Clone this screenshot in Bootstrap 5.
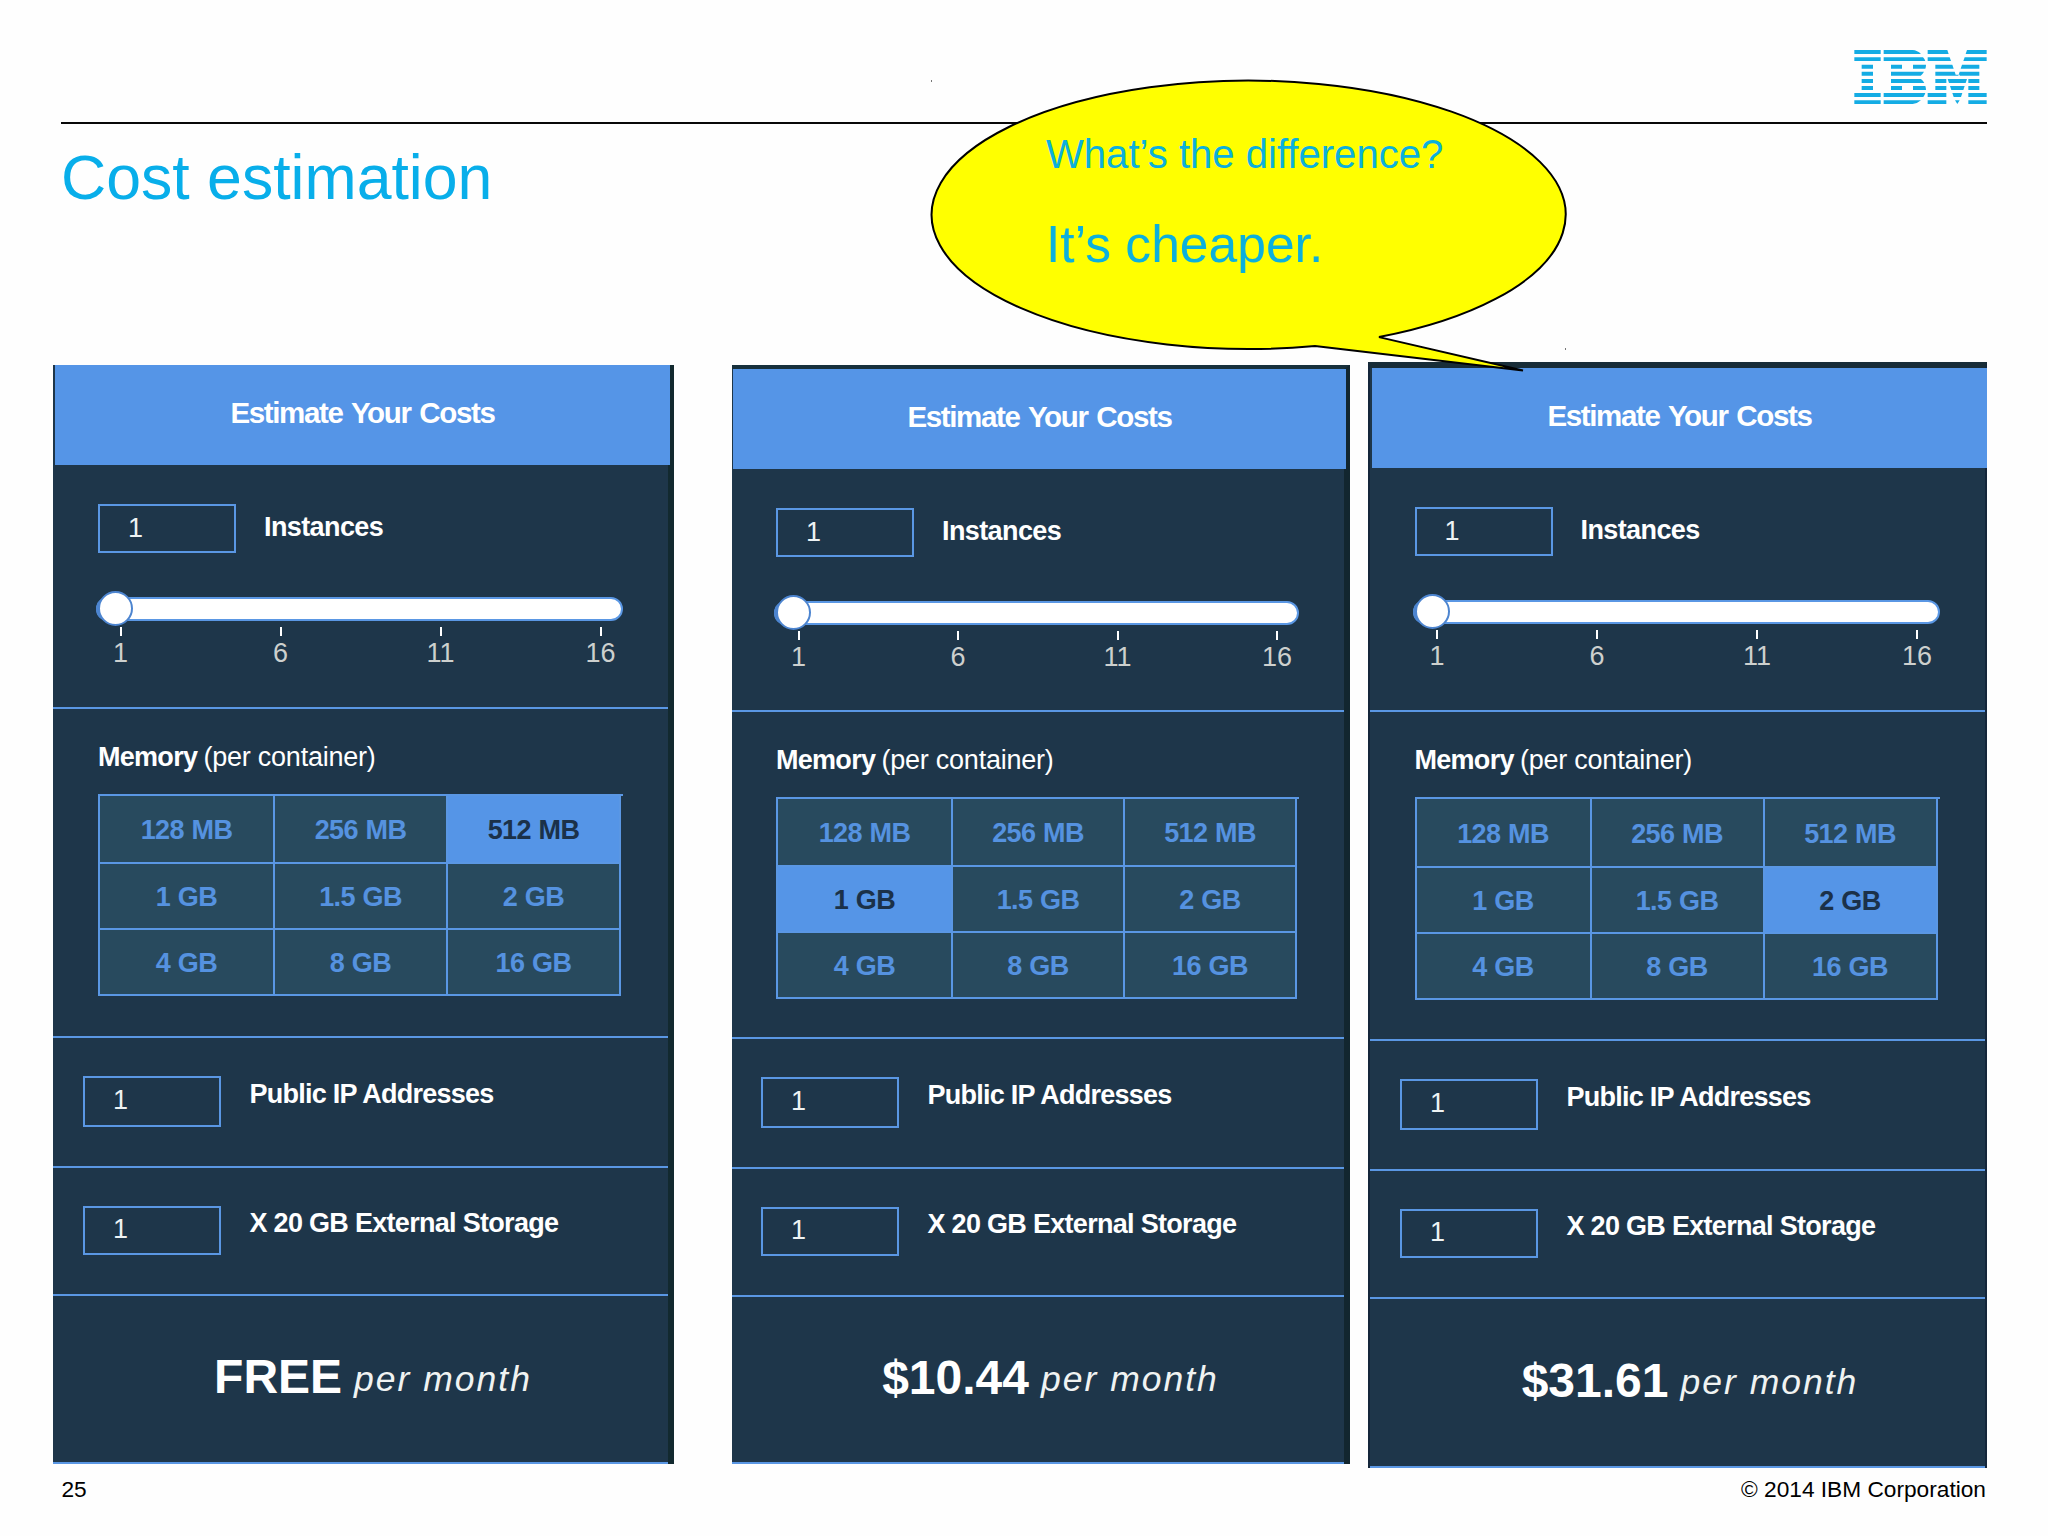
<!DOCTYPE html>
<html lang="en">
<head>
<meta charset="utf-8">
<title>Cost estimation</title>
<link href="https://cdn.jsdelivr.net/npm/bootstrap@5.3.0/dist/css/bootstrap.min.css" rel="stylesheet">
<style>
:root{--edge:#5a97e4;--fill:#5595e7;--navy:#1e364a;--cell:#284a5e;--ibm:#08aeea}
body{width:2048px;height:1536px;overflow:hidden;background:#fefefe;font-family:"Liberation Sans",Arial,sans-serif;color:#000}
.slide{width:2048px;height:1536px}
.masthead{height:124px;margin:0 61px;border-bottom:2px solid #080808;padding-top:40px}
.brand-logo{width:160px;height:80px;margin-right:-13px}
.slide-title{height:238px;margin:0;padding:18px 0 0 61px;font-size:62.6px;line-height:70px;font-weight:400;color:var(--ibm)}
.panels{padding-left:53px;height:1106px}
.panel{background:var(--navy);color:#fff;font-size:27px;line-height:28px}
.p1{width:621px;margin-top:3px;height:1099px;border-right:6px solid #12292f;--in:45px;--out:30px;--mid:244px;--mem:329px;--ip:130px}
.p2{width:618px;margin:3px 0 0 58px;height:1099px;border-top:4px solid #17303c;border-right:6px solid #12262f;--in:44px;--out:29px;--mid:243px;--mem:327px;--ip:130px}
.p3{width:619px;margin-left:18px;height:1106px;border-top:6px solid #182d38;border-left:2px solid #14263a;border-right:2px solid #14263a;--in:44.5px;--out:30px;--mid:244px;--mem:329px;--ip:130px}
.p1 .panel-title{margin:0 -2px 0 2px}.p2 .panel-title{margin:0 -2px 0 1px}.p3 .panel-title{margin:0 -2px 0 2px}
.panel-title{height:100px;background:var(--fill);font-size:29.5px;line-height:95px;font-weight:700;letter-spacing:-1.35px;word-spacing:2px;text-align:center}
.sect{border-bottom:2.6px solid var(--edge)}
.s-inst{height:var(--mid);padding:39px 0 0 var(--in)}
.s-mem{height:var(--mem);padding:34px 0 0 var(--in)}
.s-ip,.s-sto{height:var(--ip);padding:38px 0 0 var(--out)}
.s-sto{height:128px}
.s-cost{flex:1;padding:0 0 4px 25px;border-bottom:2px solid var(--edge)}
.num{width:138px;height:49px;border:2px solid var(--edge);padding-left:28px;line-height:45px;color:#eef3f4}
.s-ip .num{height:51px}
.s-sto .num{line-height:43px}
.lbl{font-weight:700;letter-spacing:-.6px;margin-left:28px;line-height:46px}
.s-ip .lbl{letter-spacing:-.74px;margin-left:28.5px;line-height:37px}
.s-sto .lbl{letter-spacing:-.7px;margin-left:28.5px;line-height:34px}
.track{width:527px;height:24px;margin:44px 0 0 -2px;border:2px solid var(--edge);border-radius:12px;background:#fff}
.p2 .track{width:525px}
.knob{position:absolute;left:0;top:-8px;width:35px;height:35px;border:2px solid #4d85d0;border-radius:50%;background:#fff}
.knob-tail{position:absolute;left:-2px;top:-2px;width:12px;height:24px;border-radius:12px 0 0 12px;background:#4d85d0}
.ticks{width:540px;margin:6px 0 0 -7.5px;color:#cdd0ce}
.p2 .ticks{width:538px}
.ticks>div{width:60px;text-align:center;margin-right:100px;flex:none}
.ticks>div:last-child{margin-right:0}
.p2 .ticks>div{margin-right:99.5px}
.ticks i{display:block;width:2px;height:9px;margin:0 auto 3px;background:#fff}
.mem-head{letter-spacing:-.72px;height:51px}
.mem-head span{letter-spacing:-.24px;margin-left:-.5px}
.mem-grid{position:relative;display:grid;width:523px;height:202px;padding:2px;gap:2px;background:var(--edge);grid-template-columns:173px 171px 1fr;grid-template-rows:66px 64px 64px}
.p2 .mem-grid{width:521px;grid-template-columns:173px 170px 1fr}
.p3 .mem-grid{height:203px;grid-template-rows:67px 64px 64px}
.mem-grid::after{content:"";position:absolute;right:-2px;top:0;width:2px;height:2px;background:var(--edge)}
.mem-grid div{display:flex;align-items:center;justify-content:center;padding-top:2px;background:var(--cell);color:#5592e0;font-weight:700;letter-spacing:-.55px;word-spacing:.5px}
.mem-grid .on{background:var(--fill);color:#1b3149}
.price{font-size:48px;font-weight:700;line-height:50px}
.per{font-size:35.5px;font-style:italic;letter-spacing:2px;line-height:50px;padding-top:3px;color:#f0f3f2}
.callout{position:absolute;left:920px;top:70px;width:660px;height:310px}
.say{position:absolute;left:1046px;top:131px;color:#0cb0dc;white-space:nowrap}
.say .q{font-size:40.1px;line-height:46px}
.say .a{font-size:51.6px;line-height:60px;margin-top:37px}
.foot{height:68px;padding:8px 62px 0 61.5px;font-size:22.7px;line-height:26px}
</style>
</head>
<body>
<main class="slide position-relative d-flex flex-column">
<header class="masthead d-flex justify-content-end flex-shrink-0">
<svg class="brand-logo flex-shrink-0" viewBox="0 0 480 240" fill="#14ace4" role="img" aria-label="IBM">
<path d="M43 30H122V42H43zM43 52H122V63H43zM65 74H99V86H65zM65 95H99V107H65zM65 117H99V129H65zM65 138H99V150H65zM43 159H122V171H43zM43 181H122V192H43z"/>
<path d="M131 30H218Q232 31 243 42H131zM131 52H249Q254 57 256 63H131zM153 74H186V86H153zM219 74H258Q258 80 256 86H219zM153 95H252Q248 102 242 107H153zM153 117H243Q249 121 253 129H153zM153 138H186V150H153zM219 138H256Q258 144 258 150H219zM131 159H256Q254 166 250 171H131zM131 181H243Q232 191 218 192H131z"/>
<path d="M263 30H322L326 42H263zM263 52H329L333 63H263zM286 74H337L341 86H286zM286 95H344L348 107H286zM286 117H319V129H286zM286 138H319V150H286zM263 159H319V171H263zM263 181H319V192H263zM440 30H381L377 42H440zM440 52H374L370 63H440zM418 74H366L362 86H418zM418 95H359L355 107H418zM418 117H385V129H418zM418 138H385V150H418zM440 159H385V171H440zM440 181H385V192H440zM344 104H359V107H344zM323 117H381L377 129H327zM330 138H374L370 150H334zM337 159H367L363 171H341zM345 181H359L352 192z"/>
</svg>
</header>
<h1 class="slide-title flex-shrink-0">Cost estimation</h1>

<div class="panels d-flex align-items-start flex-shrink-0">
<section class="panel p1 d-flex flex-column flex-shrink-0">
<div class="panel-title">Estimate Your Costs</div>
<div class="sect s-inst">
<div class="d-flex align-items-start"><div class="num">1</div><div class="lbl">Instances</div></div>
<div class="track position-relative"><span class="knob-tail"></span><span class="knob"></span></div>
<div class="ticks d-flex"><div><i></i>1</div><div><i></i>6</div><div><i></i>11</div><div><i></i>16</div></div>
</div>
<div class="sect s-mem">
<div class="mem-head"><b>Memory</b> <span>(per container)</span></div>
<div class="mem-grid"><div>128 MB</div><div>256 MB</div><div class="on">512 MB</div><div>1 GB</div><div>1.5 GB</div><div>2 GB</div><div>4 GB</div><div>8 GB</div><div>16 GB</div></div>
</div>
<div class="sect s-ip d-flex align-items-start"><div class="num">1</div><div class="lbl">Public IP Addresses</div></div>
<div class="sect s-sto d-flex align-items-start"><div class="num">1</div><div class="lbl">X 20 GB External Storage</div></div>
<div class="s-cost d-flex align-items-center justify-content-center gap-2"><span class="price">FREE</span> <span class="per ms-1">per month</span></div>
</section>

<section class="panel p2 d-flex flex-column flex-shrink-0">
<div class="panel-title">Estimate Your Costs</div>
<div class="sect s-inst">
<div class="d-flex align-items-start"><div class="num">1</div><div class="lbl">Instances</div></div>
<div class="track position-relative"><span class="knob-tail"></span><span class="knob"></span></div>
<div class="ticks d-flex"><div><i></i>1</div><div><i></i>6</div><div><i></i>11</div><div><i></i>16</div></div>
</div>
<div class="sect s-mem">
<div class="mem-head"><b>Memory</b> <span>(per container)</span></div>
<div class="mem-grid"><div>128 MB</div><div>256 MB</div><div>512 MB</div><div class="on">1 GB</div><div>1.5 GB</div><div>2 GB</div><div>4 GB</div><div>8 GB</div><div>16 GB</div></div>
</div>
<div class="sect s-ip d-flex align-items-start"><div class="num">1</div><div class="lbl">Public IP Addresses</div></div>
<div class="sect s-sto d-flex align-items-start"><div class="num">1</div><div class="lbl">X 20 GB External Storage</div></div>
<div class="s-cost d-flex align-items-center justify-content-center gap-2"><span class="price">$10.44</span> <span class="per ms-1">per month</span></div>
</section>

<section class="panel p3 d-flex flex-column flex-shrink-0">
<div class="panel-title">Estimate Your Costs</div>
<div class="sect s-inst">
<div class="d-flex align-items-start"><div class="num">1</div><div class="lbl">Instances</div></div>
<div class="track position-relative"><span class="knob-tail"></span><span class="knob"></span></div>
<div class="ticks d-flex"><div><i></i>1</div><div><i></i>6</div><div><i></i>11</div><div><i></i>16</div></div>
</div>
<div class="sect s-mem">
<div class="mem-head"><b>Memory</b> <span>(per container)</span></div>
<div class="mem-grid"><div>128 MB</div><div>256 MB</div><div>512 MB</div><div>1 GB</div><div>1.5 GB</div><div class="on">2 GB</div><div>4 GB</div><div>8 GB</div><div>16 GB</div></div>
</div>
<div class="sect s-ip d-flex align-items-start"><div class="num">1</div><div class="lbl">Public IP Addresses</div></div>
<div class="sect s-sto d-flex align-items-start"><div class="num">1</div><div class="lbl">X 20 GB External Storage</div></div>
<div class="s-cost d-flex align-items-center justify-content-center gap-2"><span class="price">$31.61</span> <span class="per ms-1">per month</span></div>
</section>
</div>

<footer class="foot d-flex justify-content-between"><span>25</span><span>© 2014 IBM Corporation</span></footer>

<svg class="callout" viewBox="920 70 660 310" aria-hidden="true">
<path d="M1315 346A317 134.2 0 1 1 1379 337.1L1523 370.5Z" fill="#ff0" stroke="#000" stroke-width="2"/>
<path d="M931.5 80v2M1565.5 348v2" stroke="#777" stroke-width="1"/>
</svg>
<div class="say"><div class="q">What’s the difference?</div><div class="a">It’s cheaper.</div></div>
</main>
<script src="https://cdn.jsdelivr.net/npm/bootstrap@5.3.0/dist/js/bootstrap.bundle.min.js"></script>
</body>
</html>
